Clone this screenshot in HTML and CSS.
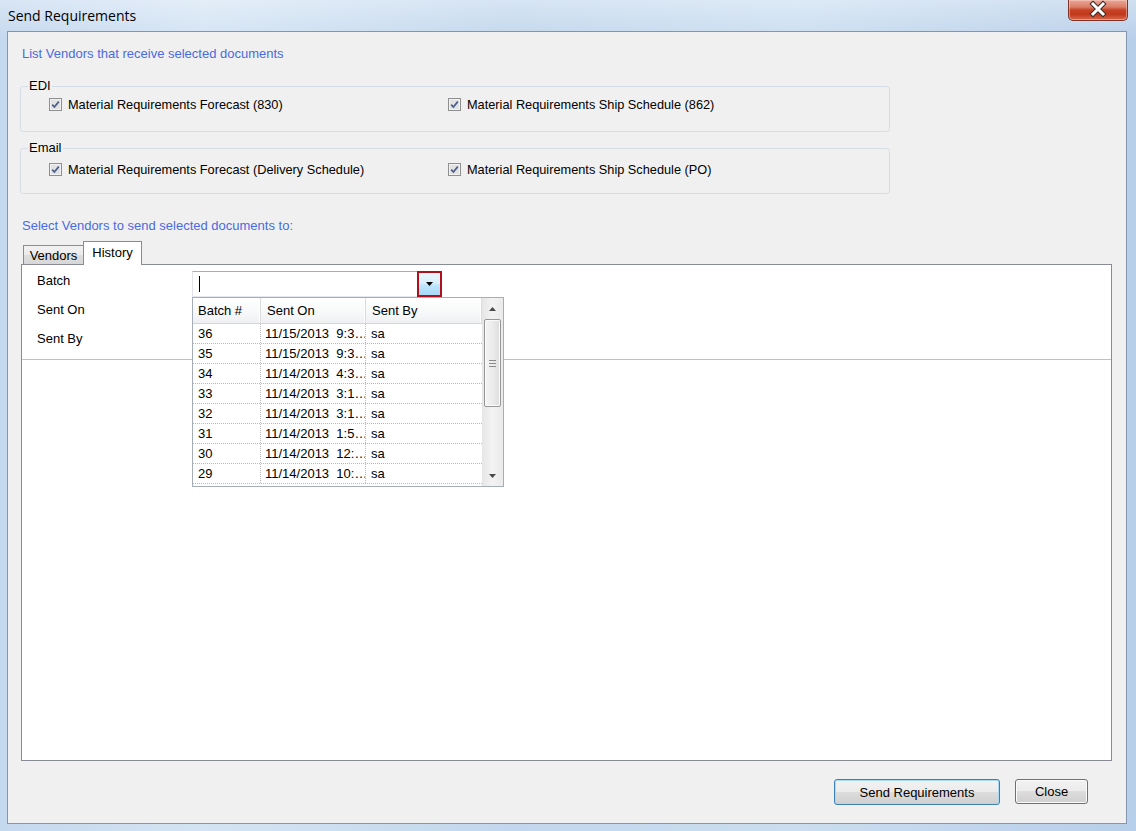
FILE: index.html
```html
<!DOCTYPE html>
<html>
<head>
<meta charset="utf-8">
<title>Send Requirements</title>
<link rel="stylesheet" href="styles.css">
</head>
<body>
<div class="window">
  <div class="titlebar">
    <span class="title">Send Requirements</span>
    <div class="close-btn">
      <svg width="58" height="19" viewBox="0 0 58 19">
        <path d="M24 4 L34 14 M34 4 L24 14" stroke="#3b2a26" stroke-width="5" stroke-linecap="square" fill="none"/>
        <path d="M24 4 L34 14 M34 4 L24 14" stroke="#ffffff" stroke-width="3" stroke-linecap="square" fill="none"/>
      </svg>
    </div>
  </div>
  <div class="client">
    <div class="instr">List Vendors that receive selected documents</div>

    <fieldset class="group edi">
      <legend>EDI</legend>
      <div class="checks">
        <label class="chk"><svg class="box" width="13" height="13" viewBox="0 0 13 13"><rect x="0.5" y="0.5" width="12" height="12" fill="#f2f2f2" stroke="#8e8f8f"/><rect x="2" y="2" width="9" height="9" fill="#e2e2e2"/><path d="M3.2 6.6 L5.4 9 L9.8 3.6" fill="none" stroke="#4b5d8c" stroke-width="1.7"/></svg>Material Requirements Forecast (830)</label>
        <label class="chk"><svg class="box" width="13" height="13" viewBox="0 0 13 13"><rect x="0.5" y="0.5" width="12" height="12" fill="#f2f2f2" stroke="#8e8f8f"/><rect x="2" y="2" width="9" height="9" fill="#e2e2e2"/><path d="M3.2 6.6 L5.4 9 L9.8 3.6" fill="none" stroke="#4b5d8c" stroke-width="1.7"/></svg>Material Requirements Ship Schedule (862)</label>
      </div>
    </fieldset>

    <fieldset class="group email">
      <legend>Email</legend>
      <div class="checks">
        <label class="chk"><svg class="box" width="13" height="13" viewBox="0 0 13 13"><rect x="0.5" y="0.5" width="12" height="12" fill="#f2f2f2" stroke="#8e8f8f"/><rect x="2" y="2" width="9" height="9" fill="#e2e2e2"/><path d="M3.2 6.6 L5.4 9 L9.8 3.6" fill="none" stroke="#4b5d8c" stroke-width="1.7"/></svg>Material Requirements Forecast (Delivery Schedule)</label>
        <label class="chk"><svg class="box" width="13" height="13" viewBox="0 0 13 13"><rect x="0.5" y="0.5" width="12" height="12" fill="#f2f2f2" stroke="#8e8f8f"/><rect x="2" y="2" width="9" height="9" fill="#e2e2e2"/><path d="M3.2 6.6 L5.4 9 L9.8 3.6" fill="none" stroke="#4b5d8c" stroke-width="1.7"/></svg>Material Requirements Ship Schedule (PO)</label>
      </div>
    </fieldset>

    <div class="instr select">Select Vendors to send selected documents to:</div>

    <div class="tabs">
      <div class="tabstrip">
        <div class="tab">Vendors</div>
        <div class="tab active">History</div>
      </div>
      <div class="tabpanel">
        <div class="filter">
          <div class="labels">
            <div>Batch</div>
            <div>Sent On</div>
            <div>Sent By</div>
          </div>
          <div class="combo-wrap">
            <div class="combo">
              <span class="caret"></span>
              <div class="dd-btn"><svg width="7" height="4" viewBox="0 0 7 4"><path d="M0 0 H7 L3.5 4 Z" fill="#000"/></svg></div>
            </div>
            <div class="dropdown">
              <div class="grid">
                <div class="head">
                  <div class="c c1">Batch #</div>
                  <div class="c c2">Sent On</div>
                  <div class="c c3">Sent By</div>
                </div>
                <div class="row"><div class="c c1">36</div><div class="c c2">11/15/2013  9:3…</div><div class="c c3">sa</div></div>
                <div class="row"><div class="c c1">35</div><div class="c c2">11/15/2013  9:3…</div><div class="c c3">sa</div></div>
                <div class="row"><div class="c c1">34</div><div class="c c2">11/14/2013  4:3…</div><div class="c c3">sa</div></div>
                <div class="row"><div class="c c1">33</div><div class="c c2">11/14/2013  3:1…</div><div class="c c3">sa</div></div>
                <div class="row"><div class="c c1">32</div><div class="c c2">11/14/2013  3:1…</div><div class="c c3">sa</div></div>
                <div class="row"><div class="c c1">31</div><div class="c c2">11/14/2013  1:5…</div><div class="c c3">sa</div></div>
                <div class="row"><div class="c c1">30</div><div class="c c2">11/14/2013  12:…</div><div class="c c3">sa</div></div>
                <div class="row"><div class="c c1">29</div><div class="c c2">11/14/2013  10:…</div><div class="c c3">sa</div></div>
              </div>
              <div class="vscroll">
                <div class="arrow"><svg width="7" height="4" viewBox="0 0 7 4"><path d="M0 4 H7 L3.5 0 Z" fill="#4a4a4a"/></svg></div>
                <div class="thumb"><span></span><span></span><span></span></div>
                <div class="track"></div>
                <div class="arrow"><svg width="7" height="4" viewBox="0 0 7 4"><path d="M0 0 H7 L3.5 4 Z" fill="#4a4a4a"/></svg></div>
              </div>
            </div>
          </div>
        </div>
        <div class="results"></div>
      </div>
    </div>

    <div class="buttons">
      <button class="btn default">Send Requirements</button>
      <button class="btn close">Close</button>
    </div>
  </div>
</div>
</body>
</html>
```

FILE: styles.css
```css
html, body {
  margin: 0;
  padding: 0;
}
body {
  width: 1136px;
  height: 831px;
  overflow: hidden;
  font-family: "Liberation Sans", Arial, sans-serif;
  font-size: 13px;
  color: #000;
}
.window {
  width: 1136px;
  height: 831px;
  box-sizing: border-box;
  background:
    linear-gradient(180deg, rgba(255,255,255,0.35) 0px, rgba(255,255,255,0) 40px),
    linear-gradient(90deg, #c4d8ee 0%, #d4e4f4 18%, #c2d7ed 45%, #cbdef1 70%, #b8cfe9 100%);
  display: flex;
  flex-direction: column;
}
.titlebar {
  height: 31px;
  display: flex;
  justify-content: space-between;
  align-items: flex-start;
  flex: none;
}
.title {
  font-family: "Open Sans", "Noto Sans", sans-serif;
  font-size: 14px;
  line-height: 31px;
  padding-left: 8px;
  color: #000;
}
.close-btn {
  width: 60px;
  height: 21px;
  margin-right: 8px;
  box-sizing: border-box;
  border: 1px solid #7f3226;
  border-top: none;
  border-radius: 0 0 5px 5px;
  background: linear-gradient(180deg, #e8a696 0%, #dc7d66 35%, #c64125 50%, #c23a1c 72%, #d8684d 100%);
  box-shadow: inset 0 0 0 1px rgba(255, 220, 210, 0.45);
  display: flex;
}
.close-btn svg { display: block; }

.client {
  margin: 0 9px 0 7px;
  height: 793px;
  box-sizing: border-box;
  border: 1px solid #8396ae;
  background: #f0f0f0;
  padding: 13px 0 0 12px;
  display: flex;
  flex-direction: column;
}
.instr {
  color: #4a6be0;
  line-height: 16px;
  padding-top: 1px;
  margin-left: 2px;
}
.instr.select {
  margin-top: 23px;
}

.group {
  width: 870px;
  box-sizing: border-box;
  margin: 0;
  border: 1px solid #d5dde6;
  border-radius: 3px;
  padding: 0;
  min-width: 0;
}
.group legend {
  line-height: 16px;
  padding: 0 1px;
  margin-left: 7px;
}
.group.edi {
  margin-top: 16px;
  padding-top: 3px;
  padding-bottom: 18px;
}
.group.email {
  margin-top: 8px;
  padding-top: 6px;
  padding-bottom: 15px;
}
.checks {
  display: grid;
  grid-template-columns: 399px auto;
  padding-left: 28px;
}
.chk {
  display: flex;
  align-items: center;
  line-height: 16px;
  height: 16px;
  font-size: 12.75px;
}
.chk .box {
  margin-right: 6px;
  flex: none;
  position: relative;
  top: -1px;
}

.tabs {
  margin-top: 7px;
  margin-left: 1px;
  width: 1091px;
}
.tabstrip {
  height: 23px;
  display: flex;
  align-items: flex-end;
  padding-left: 2px;
}
.tab {
  box-sizing: border-box;
  border: 1px solid #898c95;
  border-bottom: none;
  text-align: center;
}
.tab:first-child {
  width: 60px;
  height: 19px;
  line-height: 19px;
  background: linear-gradient(180deg, #f2f2f2 0%, #ebebeb 50%, #dddddd 51%, #d8d8d8 100%);
  border-right: none;
}
.tab.active {
  width: 59px;
  height: 24px;
  line-height: 21px;
  background: #ffffff;
  margin-bottom: -1px;
  position: relative;
  z-index: 1;
}
.tabpanel {
  height: 497px;
  box-sizing: border-box;
  border: 1px solid #898c95;
  background: #ffffff;
  display: flex;
  flex-direction: column;
}
.filter {
  height: 94px;
  border-bottom: 1px solid #b7c3d3;
  display: flex;
  flex: none;
}
.labels {
  width: 155px;
  padding-left: 15px;
  padding-top: 8px;
  display: flex;
  flex-direction: column;
  gap: 13px;
}
.labels div {
  line-height: 16px;
}
.combo-wrap {
  position: relative;
  padding-top: 6px;
  width: 250px;
  align-self: flex-start;
}
.combo {
  width: 250px;
  height: 26px;
  box-sizing: border-box;
  border: 1px solid #abadb3;
  border-bottom-color: #e3e9ef;
  border-left-color: #e2e3ea;
  background: #fff;
  display: flex;
  justify-content: space-between;
  align-items: center;
}
.caret {
  width: 1px;
  height: 16px;
  background: #000;
  margin-left: 6px;
}
.dd-btn {
  width: 25px;
  height: 26px;
  margin: -1px -1px -1px 0;
  box-sizing: border-box;
  border: 2px solid #b0101c;
  background: linear-gradient(180deg, #eaf6fd 0%, #d9f0fc 45%, #bee6fd 55%, #a7d9f5 100%);
  display: flex;
  align-items: center;
  justify-content: center;
}
.dd-btn svg { display: block; }

.dropdown {
  position: absolute;
  top: 32px;
  left: 0;
  width: 312px;
  height: 190px;
  box-sizing: border-box;
  border: 1px solid #a5adb8;
  background: #ffffff;
  display: flex;
  z-index: 5;
}
.grid {
  width: 289px;
  flex: none;
}
.head {
  height: 26px;
  box-sizing: border-box;
  display: flex;
  background: linear-gradient(180deg, #ffffff 0%, #f7f8f9 60%, #eef0f2 100%);
  border-bottom: 1px solid #d5d5d5;
}
.head .c {
  line-height: 26px;
  padding-left: 5px;
  border-right: 1px solid #dcdcdc;
  box-shadow: inset -1px 0 0 #ffffff;
}
.c {
  box-sizing: border-box;
  white-space: pre;
  overflow: hidden;
}
.c1 { width: 68px; }
.c2 { width: 105px; }
.c3 { width: 116px; }
.head .c2 { padding-left: 6px; }
.head .c3 { padding-left: 6px; }
.row {
  height: 20px;
  box-sizing: border-box;
  display: flex;
  border-bottom: 1px dotted #b9b9b9;
}
.row .c {
  line-height: 20px;
  padding-left: 5px;
  border-right: 1px dotted #b9b9b9;
}
.row .c2 { padding-left: 4px; }
.row .c3 { border-right: none; }

.vscroll {
  width: 21px;
  flex: none;
  display: flex;
  flex-direction: column;
  align-items: center;
  background: linear-gradient(90deg, #e6e6e6 0%, #f3f3f3 50%, #eaeaea 100%);
}
.vscroll .arrow {
  height: 21px;
  width: 100%;
  display: flex;
  align-items: center;
  justify-content: center;
  flex: none;
}
.vscroll .arrow svg { display: block; }
.thumb {
  width: 17px;
  height: 88px;
  box-sizing: border-box;
  border: 1px solid #979797;
  border-radius: 2px;
  background: linear-gradient(90deg, #f4f4f4 0%, #ececec 50%, #dcdcdc 100%);
  box-shadow: inset 0 0 0 1px #fbfbfb;
  display: flex;
  flex-direction: column;
  align-items: center;
  justify-content: center;
  gap: 2px;
  flex: none;
}
.thumb span {
  width: 7px;
  height: 1px;
  background: #8a8a8a;
}
.track { flex: 1; }

.results {
  flex: 1;
}

.buttons {
  margin-top: 18px;
  display: flex;
  justify-content: flex-end;
  align-items: flex-start;
  gap: 15px;
  padding-right: 38px;
}
.btn {
  font-family: "Liberation Sans", Arial, sans-serif;
  font-size: 13px;
  color: #000;
  box-sizing: border-box;
  border: 1px solid #707070;
  border-radius: 3px;
  background: linear-gradient(180deg, #f2f2f2 0%, #ebebeb 49%, #dddddd 50%, #cfcfcf 100%);
  box-shadow: inset 0 0 0 1px #fbfbfb;
  padding: 0;
  margin: 0;
}
.btn.default {
  width: 166px;
  height: 26px;
  border-color: #3c7fb1;
  box-shadow: inset 0 0 0 1px #a8dcf6;
}
.btn.close {
  width: 73px;
  height: 25px;
}
```
